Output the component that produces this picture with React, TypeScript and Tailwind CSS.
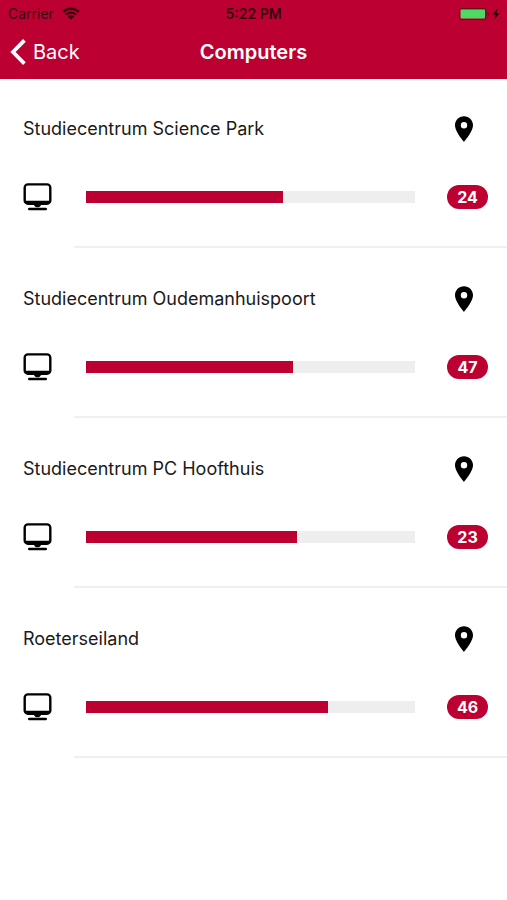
type Location = {
  name: string;
  available: number;
  // Share of the computers in use, in percent.
  usage: number;
};

const locations: Location[] = [
  { name: "Studiecentrum Science Park", available: 24, usage: 60 },
  { name: "Studiecentrum Oudemanhuispoort", available: 47, usage: 63 },
  { name: "Studiecentrum PC Hoofthuis", available: 23, usage: 64 },
  { name: "Roeterseiland", available: 46, usage: 73.5 },
];

function WifiIcon() {
  return (
    <svg aria-hidden="true" viewBox="0 0 18 13" className="h-[13px] w-[18px]" fill="currentColor">
      <path d="M9 0.6C5.6 0.6 2.6 1.9 0.4 4L2.1 5.8C3.9 4.1 6.3 3 9 3s5.1 1.1 6.9 2.8L17.6 4C15.4 1.9 12.4 0.6 9 0.6z" />
      <path d="M9 4.4c-2.3 0-4.4 0.9-5.9 2.4l1.7 1.8C5.9 7.5 7.4 6.8 9 6.8s3.1 0.7 4.2 1.8l1.7-1.8C13.4 5.3 11.3 4.4 9 4.4z" />
      <path d="M9 8.2c-1.3 0-2.4 0.5-3.2 1.4L9 12.8l3.2-3.2C11.4 8.7 10.3 8.2 9 8.2z" />
    </svg>
  );
}

function BatteryIcon() {
  return (
    <svg aria-hidden="true" viewBox="0 0 44 14" className="h-[14px] w-[44px]">
      <rect x="0.5" y="1.5" width="26.6" height="11" rx="2.4" fill="none" stroke="#6e0a1e" strokeWidth="1" />
      <rect x="1.6" y="2.6" width="24.4" height="8.8" rx="0.8" fill="#4cd964" />
      <path d="M28.6 5.2c1 .2 1.5.9 1.5 1.8s-.5 1.6-1.5 1.8z" fill="#6e0a1e" />
      <path d="M38.6 1.4 33.6 7.6h3l-1.200 5 5-6.400h-3z" fill="#1c0006" />
    </svg>
  );
}

function BackIcon() {
  return (
    <svg aria-hidden="true" viewBox="0 0 16 26" className="h-[26px] w-4" fill="none" stroke="currentColor" strokeWidth="3.8">
      <path d="M14.4 1.4 3 13l11.4 11.6" />
    </svg>
  );
}

function ComputerIcon() {
  return (
    <svg aria-hidden="true" viewBox="0 0 29 28" className="h-7 w-[29px]">
      <path
        fillRule="evenodd"
        d="M5 0.3h19a4.5 4.5 0 0 1 4.5 4.5v12.6a4.5 4.5 0 0 1-4.5 4.500h-6c-.6 1.600-1.800 2.400-3.500 2.400s-2.900-.8-3.500-2.400H5a4.500 4.500 0 0 1-4.500-4.500V4.800A4.500 4.500 0 0 1 5 0.300zM4.900 2.400c-1.300 0-2 .7-2 2v13.400h23.200V4.400c0-1.300-.7-2-2-2z"
      />
      <rect x="5" y="24.8" width="19" height="2.5" rx="1.2" />
    </svg>
  );
}

function PinIcon() {
  return (
    <svg aria-hidden="true" viewBox="0 0 18 26" className="h-[26px] w-[18px]">
      <path
        fillRule="evenodd"
        d="M9 0.3C4 0.3 0 4.3 0 9.2c0 6.4 9 16.6 9 16.6s9-10.2 9-16.6C18 4.3 14 0.3 9 0.3zm0 5.7a3.2 3.2 0 1 1 0 6.4 3.2 3.2 0 0 1 0-6.4z"
      />
    </svg>
  );
}

function StatusBar() {
  return (
    <div className="grid h-[27px] grid-cols-3 items-center px-2 text-sm text-[#3a0010]">
      <div className="flex items-center gap-2">
        <span>Carrier</span>
        <WifiIcon />
      </div>
      <span className="text-center font-semibold">5:22 PM</span>
      <div className="-mr-1 flex justify-end">
        <BatteryIcon />
      </div>
    </div>
  );
}

function Header() {
  return (
    <header className="bg-[#bc0031]">
      <StatusBar />
      <div className="grid h-[52px] grid-cols-3 items-center px-[10px] pb-[2px] text-xl text-white">
        <button type="button" className="flex items-center gap-[7px] justify-self-start">
          <BackIcon />
          Back
        </button>
        <h1 className="text-center font-semibold">Computers</h1>
      </div>
    </header>
  );
}

function LocationRow({ name, available, usage }: Location) {
  return (
    <li className="pt-9 pb-px">
      <div className="flex h-7 items-center justify-between pr-[34px] pl-[23px]">
        <h2 className="text-lg text-[#1a1a1a]">{name}</h2>
        <button type="button" aria-label={`Show ${name} on the map`}>
          <PinIcon />
        </button>
      </div>
      <div className="mt-10 flex h-7 items-center pr-[19px] pl-[23px]">
        <ComputerIcon />
        <div
          role="progressbar"
          aria-label={`Computers in use at ${name}`}
          aria-valuenow={usage}
          aria-valuemin={0}
          aria-valuemax={100}
          className="mr-8 ml-[34px] h-3 flex-1 bg-[#eeeeee]"
        >
          <div className="h-full bg-[#bc0031]" style={{ width: `${usage}%` }} />
        </div>
        <span className="flex h-6 w-[41px] items-center justify-center rounded-full bg-[#bc0031] text-base font-bold text-white">
          {available}
        </span>
      </div>
      <div className="mt-[35px] ml-[74px] h-[2px] bg-[#f0f0f0]" />
    </li>
  );
}

export default function App() {
  return (
    <div className="min-h-screen bg-white font-[Inter,sans-serif]">
      <Header />
      <main>
        <ul>
          {locations.map((location) => (
            <LocationRow key={location.name} {...location} />
          ))}
        </ul>
      </main>
    </div>
  );
}
